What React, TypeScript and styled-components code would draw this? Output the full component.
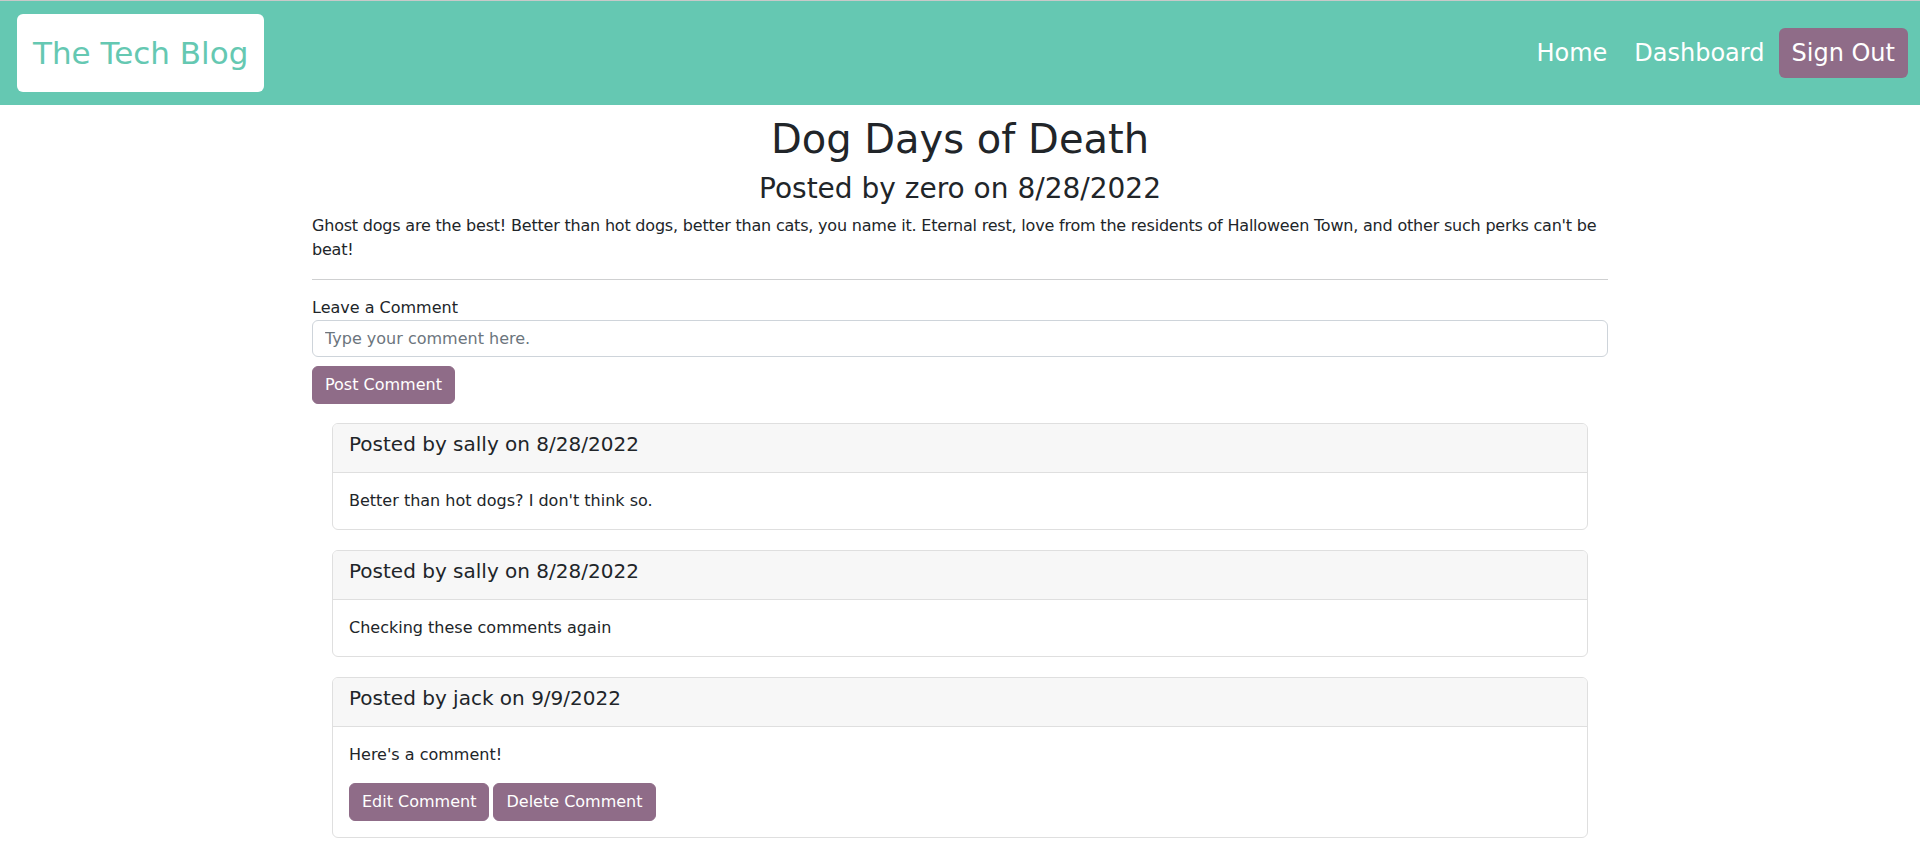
import React from "react";
import styled, { createGlobalStyle } from "styled-components";

const GlobalStyle = createGlobalStyle`
  html, body {
    margin: 0;
    padding: 0;
    background: #ffffff;
  }
  body {
    font-family: "DejaVu Sans", "Liberation Sans", sans-serif;
    font-size: 16px;
    line-height: 1.5;
    color: #212529;
  }
  * { box-sizing: border-box; }
`;

const TEAL = "#65c8b2";
const PURPLE = "#8f6c88";

const NavBar = styled.header`
  display: flex;
  align-items: center;
  justify-content: space-between;
  height: 105px;
  border-top: 1px solid #c9c9c9;
  background: ${TEAL};
  padding: 0 12px 0 17px;
`;

const Logo = styled.a`
  display: block;
  background: #ffffff;
  border-radius: 6px;
  padding: 21px 16px 19px;
  font-size: 31px;
  line-height: 1.2;
  color: ${TEAL};
  text-decoration: none;
`;

const NavLinks = styled.nav`
  display: flex;
  align-items: center;
  gap: 1px;
`;

const NavLink = styled.a<{ $filled?: boolean }>`
  display: block;
  height: 50px;
  line-height: 50px;
  padding: 0 13px;
  font-size: 24px;
  color: #ffffff;
  text-decoration: none;
  border-radius: 6px;
  background: ${(p) => (p.$filled ? PURPLE : "transparent")};
`;

const Main = styled.main`
  max-width: 1320px;
  margin: 0 auto;
  padding: 0 12px;
`;

const Title = styled.h1`
  margin: 10px 0 9px;
  font-size: 40px;
  font-weight: 400;
  line-height: 1.2;
  text-align: center;
`;

const Byline = styled.h2`
  margin: 0;
  font-size: 28px;
  font-weight: 400;
  line-height: 1.2;
  text-align: center;
`;

const PostBody = styled.p`
  margin: 8px 0 17px;
  font-size: 16px;
  line-height: 24px;
  letter-spacing: -0.2px;
`;

const Divider = styled.hr`
  margin: 0 0 16px;
  border: 0;
  border-top: 1px solid #cfd0d1;
`;

const CommentForm = styled.form`
  display: flex;
  flex-direction: column;
  align-items: flex-start;
`;

const Label = styled.label`
  display: block;
  font-size: 16px;
  line-height: 24px;
`;

const Input = styled.input`
  width: 100%;
  height: 37px;
  padding: 0 12px;
  border: 1px solid #ced4da;
  border-radius: 6px;
  font-family: inherit;
  font-size: 16px;
  color: #212529;
  background: #fff;
  &::placeholder {
    color: #6c757d;
  }
`;

const Button = styled.button<{ $mt?: number }>`
  height: 38px;
  padding: 0 12px;
  margin-top: ${(p) => p.$mt ?? 0}px;
  border: 1px solid ${PURPLE};
  border-radius: 6px;
  background: ${PURPLE};
  color: #ffffff;
  font-family: inherit;
  font-size: 16px;
  line-height: 24px;
  cursor: pointer;
`;

const CommentList = styled.section`
  padding: 19px 20px 0;
  display: flex;
  flex-direction: column;
  gap: 20px;
`;

const Card = styled.article`
  border: 1px solid #dfdfdf;
  border-radius: 6px;
  overflow: hidden;
`;

const CardHeader = styled.div`
  background: #f7f7f7;
  border-bottom: 1px solid #dfdfdf;
  padding: 8px 16px;
`;

const CardTitle = styled.h5`
  margin: 0 0 8px;
  font-size: 20px;
  font-weight: 400;
  line-height: 24px;
`;

const CardBody = styled.div`
  padding: 16px;
`;

const CommentText = styled.p<{ $spaced?: boolean }>`
  margin: 0 0 ${(p) => (p.$spaced ? 16 : 0)}px;
  font-size: 16px;
  line-height: 24px;
`;

const Actions = styled.div`
  display: flex;
  gap: 4px;
`;

type Comment = {
  author: string;
  date: string;
  text: string;
  mine?: boolean;
};

const comments: Comment[] = [
  { author: "sally", date: "8/28/2022", text: "Better than hot dogs? I don't think so." },
  { author: "sally", date: "8/28/2022", text: "Checking these comments again" },
  { author: "jack", date: "9/9/2022", text: "Here's a comment!", mine: true },
];

export default function App() {
  return (
    <>
      <GlobalStyle />
      <NavBar>
        <Logo href="#">The Tech Blog</Logo>
        <NavLinks>
          <NavLink href="#">Home</NavLink>
          <NavLink href="#">Dashboard</NavLink>
          <NavLink href="#" $filled>
            Sign Out
          </NavLink>
        </NavLinks>
      </NavBar>
      <Main>
        <Title>Dog Days of Death</Title>
        <Byline>Posted by zero on 8/28/2022</Byline>
        <PostBody>
          Ghost dogs are the best! Better than hot dogs, better than cats, you name it. Eternal rest, love
          from the residents of Halloween Town, and other such perks can't be beat!
        </PostBody>
        <Divider />
        <CommentForm onSubmit={(e) => e.preventDefault()}>
          <Label htmlFor="comment">Leave a Comment</Label>
          <Input id="comment" placeholder="Type your comment here." />
          <Button type="submit" $mt={9}>
            Post Comment
          </Button>
        </CommentForm>
        <CommentList>
          {comments.map((c, i) => (
            <Card key={i}>
              <CardHeader>
                <CardTitle>
                  Posted by {c.author} on {c.date}
                </CardTitle>
              </CardHeader>
              <CardBody>
                <CommentText $spaced={c.mine}>{c.text}</CommentText>
                {c.mine && (
                  <Actions>
                    <Button type="button">Edit Comment</Button>
                    <Button type="button">Delete Comment</Button>
                  </Actions>
                )}
              </CardBody>
            </Card>
          ))}
        </CommentList>
      </Main>
    </>
  );
}
